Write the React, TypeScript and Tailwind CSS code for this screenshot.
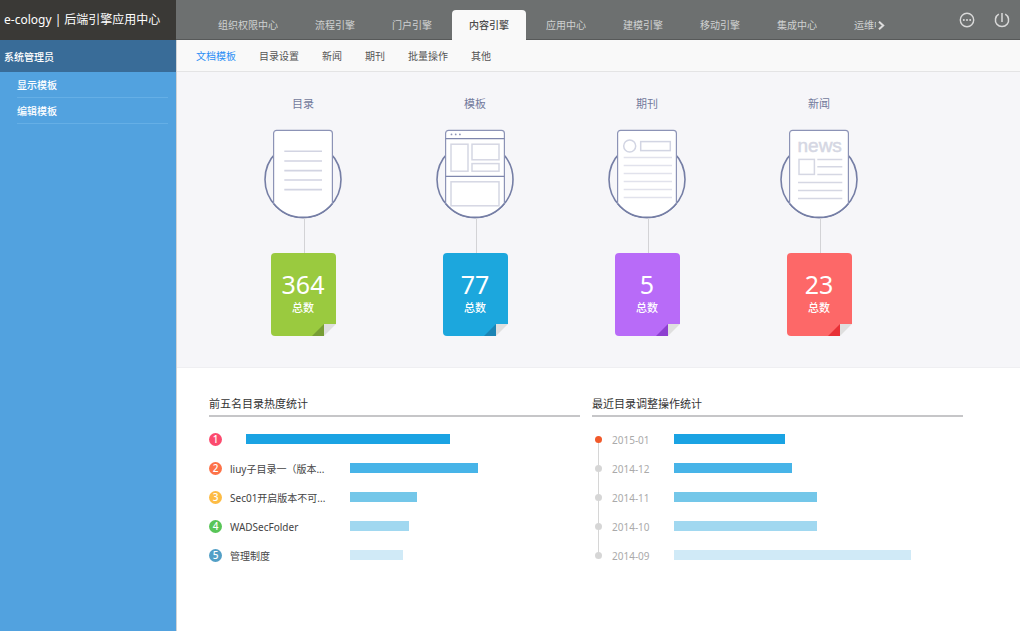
import type { ReactNode } from "react";

const navItems = [
  "组织权限中心",
  "流程引擎",
  "门户引擎",
  "内容引擎",
  "应用中心",
  "建模引擎",
  "移动引擎",
  "集成中心",
  "运维中心",
];
const activeNav = "内容引擎";

const subItems = ["文档模板", "目录设置", "新闻", "期刊", "批量操作", "其他"];
const activeSub = "文档模板";

const sideItems = ["显示模板", "编辑模板"];

const barColors = ["bg-[#1aa3e3]", "bg-[#47b4e8]", "bg-[#74c7e9]", "bg-[#a1d8f0]", "bg-[#d0eaf7]"];

const topFolders = [
  { name: "", share: 61, badge: "bg-[#fc4a6e]" },
  { name: "liuy子目录一（版本...", share: 55.8, badge: "bg-[#fd7248]" },
  { name: "Sec01开启版本不可...", share: 29, badge: "bg-[#fdbc45]" },
  { name: "WADSecFolder", share: 25.8, badge: "bg-[#58c557]" },
  { name: "管理制度", share: 23.1, badge: "bg-[#529fc6]" },
];

const monthly = [
  { month: "2015-01", share: 38.4 },
  { month: "2014-12", share: 40.8 },
  { month: "2014-11", share: 49.4 },
  { month: "2014-10", share: 49.4 },
  { month: "2014-09", share: 82 },
];

function Medallion({ children }: { children: ReactNode }) {
  return (
    <svg aria-hidden="true" viewBox="0 0 82 90" className="mt-4 h-[90px] w-[82px] overflow-visible" fill="none">
      <circle cx="41" cy="51.5" r="38" stroke="#757ea5" strokeWidth="1.6" />
      <path
        d="M11.6 75.5V5.3a3 3 0 0 1 3-3h52.8a3 3 0 0 1 3 3v70.2A38 38 0 0 1 11.6 75.5Z"
        fill="#fff"
      />
      <path d="M11.6 75.5V5.3a3 3 0 0 1 3-3h52.8a3 3 0 0 1 3 3v70.2" stroke="#8c93b6" strokeWidth="1.2" />
      <path d="M70.4 75.5A38 38 0 0 1 11.6 75.5" stroke="#757ea5" strokeWidth="1.6" />
      {children}
    </svg>
  );
}

function FolderArt() {
  return (
    <Medallion>
      <path
        d="M22.3 23.3H60M22.3 33H60M22.3 42.6H60M22.3 52H60M22.3 61.6H60"
        stroke="#d2d4e2"
        strokeWidth="1.6"
      />
    </Medallion>
  );
}

function TemplateArt() {
  return (
    <Medallion>
      <path d="M11.6 10.6H70.4M11.6 48.4H70.4" stroke="#7f87ad" strokeWidth="1.2" />
      <g fill="#8c93b6">
        <circle cx="17.5" cy="6.4" r="0.9" />
        <circle cx="21.7" cy="6.4" r="0.9" />
        <circle cx="25.9" cy="6.4" r="0.9" />
      </g>
      <g stroke="#d5d7e3" strokeWidth="1.5">
        <rect x="17" y="16.2" width="17" height="27" />
        <rect x="38" y="16.2" width="27" height="15.6" />
        <rect x="38" y="35.6" width="27" height="7.6" />
        <rect x="17" y="53.8" width="48" height="24" />
      </g>
    </Medallion>
  );
}

function JournalArt() {
  return (
    <Medallion>
      <g stroke="#d2d5e3" strokeWidth="1.5">
        <circle cx="23.7" cy="18" r="6" />
        <rect x="34.7" y="13.6" width="29.6" height="9" />
      </g>
      <path
        d="M17.7 29.4H66M17.7 37.6H66M17.7 45.6H66M17.7 53.6H66M17.7 61.6H66M17.7 69.6H66"
        stroke="#e1e2ec"
        strokeWidth="1.5"
      />
    </Medallion>
  );
}

function NewsArt() {
  return (
    <Medallion>
      <text
        x="41.7"
        y="23.6"
        textAnchor="middle"
        fontFamily="Liberation Sans, sans-serif"
        fontSize="19"
        fill="#d5d7e3"
        stroke="#d5d7e3"
        strokeWidth="0.5"
      >
        news
      </text>
      <g stroke="#d5d7e3" strokeWidth="1.5">
        <rect x="21" y="31.4" width="15.4" height="15" />
        <path d="M39.3 31.4H64.3M39.3 38.7H64.3M39.3 46.6H64.3M20 54.4H64.3M20 62.4H64.3M20 70.4H64.3" />
      </g>
    </Medallion>
  );
}

const stats = [
  { label: "目录", total: 364, art: <FolderArt />, card: "bg-[#9aca3f]", fold: "#779d35" },
  { label: "模板", total: 77, art: <TemplateArt />, card: "bg-[#1ca7dd]", fold: "#1b84b4" },
  { label: "期刊", total: 5, art: <JournalArt />, card: "bg-[#b86bf8]", fold: "#8d3fd0" },
  { label: "新闻", total: 23, art: <NewsArt />, card: "bg-[#fd6868]", fold: "#e83036" },
];

function TotalCard({ total, card, fold }: { total: number; card: string; fold: string }) {
  return (
    <div className={`relative flex h-[83px] w-[65px] flex-col items-center rounded-[4px] pt-[15px] text-white ${card}`}>
      <span className="text-[25px] leading-8">{total}</span>
      <span className="text-[11px] leading-4 font-medium">总数</span>
      <svg aria-hidden="true" viewBox="0 0 24 12" className="absolute right-0 bottom-0 h-3 w-6">
        <path d="M12 0H24V12H12Z" fill="#f6f6f9" />
        <path d="M12 0V12H0Z" fill={fold} />
        <path d="M12 0H24L12 12Z" fill="#dfdfdf" />
      </svg>
    </div>
  );
}

function Panel({ title, children }: { title: string; children: ReactNode }) {
  return (
    <section>
      <h2 className="border-b-2 border-[#c6c6c8] pb-[3px] text-[11px] leading-4 text-[#333]">{title}</h2>
      <ul className="mt-[7px]">{children}</ul>
    </section>
  );
}

function Bar({ share, color }: { share: number; color: string }) {
  return (
    <div className="mt-[2px] min-w-0 flex-1">
      <div className={`h-[10px] ${color}`} style={{ width: `${share}%` }} />
    </div>
  );
}

export default function App() {
  return (
    <div className="flex min-h-screen bg-white font-['Noto_Sans','Noto_Sans_CJK_SC',sans-serif] text-[10px]">
      <aside className="w-44 shrink-0 bg-[#52a2df] text-white">
        <h1 className="h-10 bg-[#3a3936] pl-1 text-[12px] leading-10 whitespace-nowrap">
          e-cology | 后端引擎应用中心
        </h1>
        <p className="h-8 bg-[#396c98] pl-1 leading-[34px] font-medium">系统管理员</p>
        <nav className="mr-2 ml-[17px]">
          {sideItems.map((item) => (
            <a key={item} href="#" className="block h-[26px] border-b border-[#65afe6] leading-[26px] font-medium">
              {item}
            </a>
          ))}
        </nav>
      </aside>

      <div className="flex min-w-0 flex-1 flex-col">
        <header className="flex h-10 shrink-0 items-end bg-[#6d7070] shadow-[inset_0_-1px_0_#575959]">
          <nav className="flex min-w-0 flex-1 gap-[3px] overflow-hidden pl-[25px]">
            {navItems.map((item) => (
              <a
                key={item}
                href="#"
                className={
                  item === activeNav
                    ? "h-[30px] shrink-0 rounded-t-[4px] bg-[#f9f9f9] px-[17px] leading-[30px] font-medium text-[#4a4a4a]"
                    : "h-[30px] shrink-0 px-[17px] leading-[30px] text-[#cfd0d0]"
                }
              >
                {item}
              </a>
            ))}
          </nav>
          <button type="button" aria-label="更多" className="flex h-[30px] w-[12px] shrink-0 items-center pl-[2px]">
            <svg viewBox="0 0 7 9" className="h-[9px] w-[7px]" fill="none" stroke="#dcdcdc" strokeWidth="2">
              <path d="M1 0.7 5.2 4.5 1 8.3" />
            </svg>
          </button>
          <div className="ml-[70px] flex h-10 shrink-0 items-center gap-[17px] pr-[9px]">
            <button type="button" aria-label="消息">
              <svg viewBox="0 0 18 18" className="block size-[18px]" fill="none" stroke="#d9d9d9" strokeWidth="1.4">
                <circle cx="9" cy="9" r="6.7" />
                <g fill="#d9d9d9" stroke="none">
                  <circle cx="5.8" cy="9" r="1" />
                  <circle cx="9" cy="9" r="1" />
                  <circle cx="12.2" cy="9" r="1" />
                </g>
              </svg>
            </button>
            <button type="button" aria-label="退出">
              <svg viewBox="0 0 18 18" className="block size-[18px]" fill="none" stroke="#d9d9d9" strokeWidth="1.5">
                <path d="M5.8 3.2a6.6 6.6 0 1 0 6.4 0M9 2v9" />
              </svg>
            </button>
          </div>
        </header>

        <main className="flex-1 border-l border-[#cfd3d6]">
          <nav className="flex h-8 gap-[23px] border-b border-[#e4e4e5] bg-[#f9f9f9] pl-[19px]">
            {subItems.map((item) => (
              <a
                key={item}
                href="#"
                className={item === activeSub ? "leading-8 text-[#2a8ef5]" : "leading-8 text-[#555]"}
              >
                {item}
              </a>
            ))}
          </nav>

          <section className="grid grid-cols-4 border-b border-[#efeff2] bg-[#f6f6f9] pt-6 pr-[115px] pb-[31px] pl-10">
            {stats.map((s) => (
              <div key={s.label} className="flex flex-col items-center">
                <h2 className="text-[11px] leading-4 text-[#737a9c]">{s.label}</h2>
                {s.art}
                <div className="ml-[2px] h-[35px] w-px bg-[#d3d3d6]" />
                <TotalCard total={s.total} card={s.card} fold={s.fold} />
              </div>
            ))}
          </section>

          <div className="grid grid-cols-2 gap-3 pt-7 pr-[57px] pl-8">
            <Panel title="前五名目录热度统计">
              {topFolders.map((f, i) => (
                <li key={f.badge} className="flex h-[29px] items-start pt-2">
                  <span
                    className={`mt-px mr-2 size-[13px] shrink-0 rounded-full text-center text-[10px] leading-[13px] font-medium text-white ${f.badge}`}
                  >
                    {i + 1}
                  </span>
                  <span
                    className={`shrink-0 leading-4 whitespace-nowrap text-[#444] ${f.name ? "w-[120px]" : "w-4"}`}
                  >
                    {f.name}
                  </span>
                  <Bar share={f.share} color={barColors[i]} />
                </li>
              ))}
            </Panel>

            <Panel title="最近目录调整操作统计">
              {monthly.map((m, i) => (
                <li key={m.month} className="relative flex h-[29px] items-start pt-2 pl-[3px]">
                  {i < monthly.length - 1 && (
                    <span className="absolute top-4 left-[6px] h-[29px] w-px bg-[#d6d6d6]" />
                  )}
                  <span
                    className={`relative mt-1 mr-[10px] size-[7px] shrink-0 rounded-full ${
                      i === 0 ? "bg-[#f1592a]" : "bg-[#d6d6d6]"
                    }`}
                  />
                  <span className="w-[62px] shrink-0 leading-4 text-[#aaa]">{m.month}</span>
                  <Bar share={m.share} color={barColors[i]} />
                </li>
              ))}
            </Panel>
          </div>
        </main>
      </div>
    </div>
  );
}
